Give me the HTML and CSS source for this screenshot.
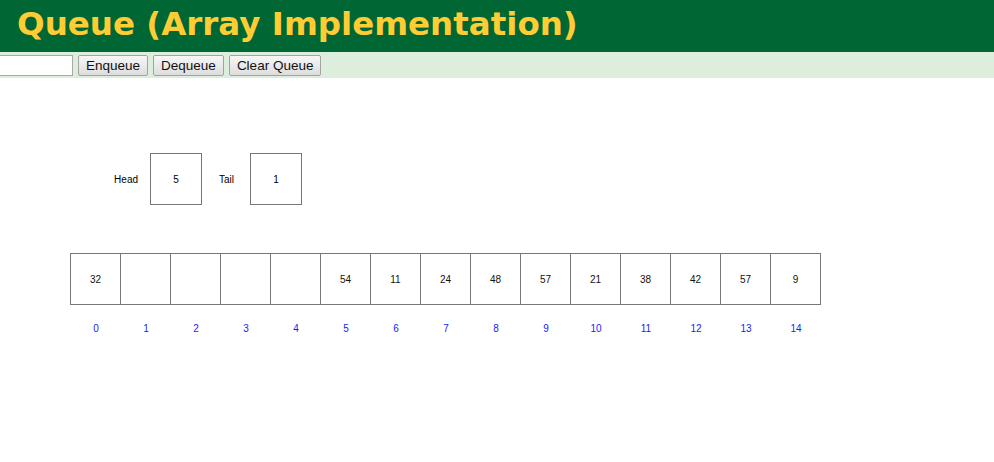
FILE: index.html
```html
<!DOCTYPE html>
<html lang="en">
<head>
    <meta charset="UTF-8">
    <title>Queue (Array Implementation)</title>
    <link rel="stylesheet" href="styles.css">
</head>
<body>

<div class="header">
    <h1>Queue (Array Implementation)</h1>
</div>

<div class="controls">
    <input type="text" class="value-input">
    <button>Enqueue</button>
    <button>Dequeue</button>
    <button>Clear Queue</button>
</div>

<div class="canvas">
    <!-- HEAD / TAIL POINTERS -->
    <div class="pointers">
        <span class="label head-label">Head</span>
        <div class="box">5</div>
        <span class="label tail-label">Tail</span>
        <div class="box">1</div>
    </div>

    <!-- ARRAY -->
    <div class="array">
        <div class="cell">32</div>
        <div class="cell"></div>
        <div class="cell"></div>
        <div class="cell"></div>
        <div class="cell"></div>
        <div class="cell">54</div>
        <div class="cell">11</div>
        <div class="cell">24</div>
        <div class="cell">48</div>
        <div class="cell">57</div>
        <div class="cell">21</div>
        <div class="cell">38</div>
        <div class="cell">42</div>
        <div class="cell">57</div>
        <div class="cell">9</div>
    </div>
    <div class="indices">
        <span>0</span><span>1</span><span>2</span><span>3</span><span>4</span>
        <span>5</span><span>6</span><span>7</span><span>8</span><span>9</span>
        <span>10</span><span>11</span><span>12</span><span>13</span><span>14</span>
    </div>
</div>

</body>
</html>
```

FILE: styles.css
```css
body {
    margin: 0;
    font-family: "Liberation Sans", Arial, sans-serif;
    background: white;
    overflow: hidden;
}
.header {
    background: #006633;
    height: 52px;
}
h1 {
    margin: 0;
    padding-left: 17px;
    font-family: "DejaVu Sans", Verdana, sans-serif;
    font-weight: bold;
    font-size: 32.5px;
    line-height: 49px;
    color: #ffcc33;
}
.controls {
    background: #ddeedd;
    height: 26px;
    display: flex;
    align-items: center;
    gap: 5px;
}
.value-input {
    width: 150px;
    height: 21px;
    margin-left: -77px;
    padding: 0;
    border: 1px solid #a9a9a9;
    box-sizing: border-box;
}
button {
    height: 21px;
    padding: 0 7px;
    font-family: "Liberation Sans", Arial, sans-serif;
    font-size: 13.5px;
    color: #111;
    background: linear-gradient(#f7f7f7, #dddddd);
    border: 1px solid #a3a3a3;
    border-radius: 2px;
}
.canvas {
    padding-left: 70px;
}
.pointers {
    display: flex;
    align-items: center;
    margin-top: 75px;
    font-size: 10px;
}
.label {
    text-align: right;
}
.head-label {
    width: 68px;
    padding-right: 12px;
}
.tail-label {
    width: 32px;
    padding-right: 16px;
}
.box {
    width: 50px;
    height: 50px;
    border: 1px solid #777;
    display: flex;
    align-items: center;
    justify-content: center;
}
.array {
    display: flex;
    margin-top: 48px;
    width: max-content;
    border-left: 1px solid #777;
    border-top: 1px solid #777;
    border-bottom: 1px solid #777;
}
.cell {
    width: 49px;
    height: 50px;
    border-right: 1px solid #777;
    display: flex;
    align-items: center;
    justify-content: center;
    font-size: 10px;
    color: #111;
}
.indices {
    display: flex;
    margin-top: 18px;
    padding-left: 1px;
}
.indices span {
    width: 50px;
    text-align: center;
    font-size: 10px;
    color: #1a1aff;
}
```
